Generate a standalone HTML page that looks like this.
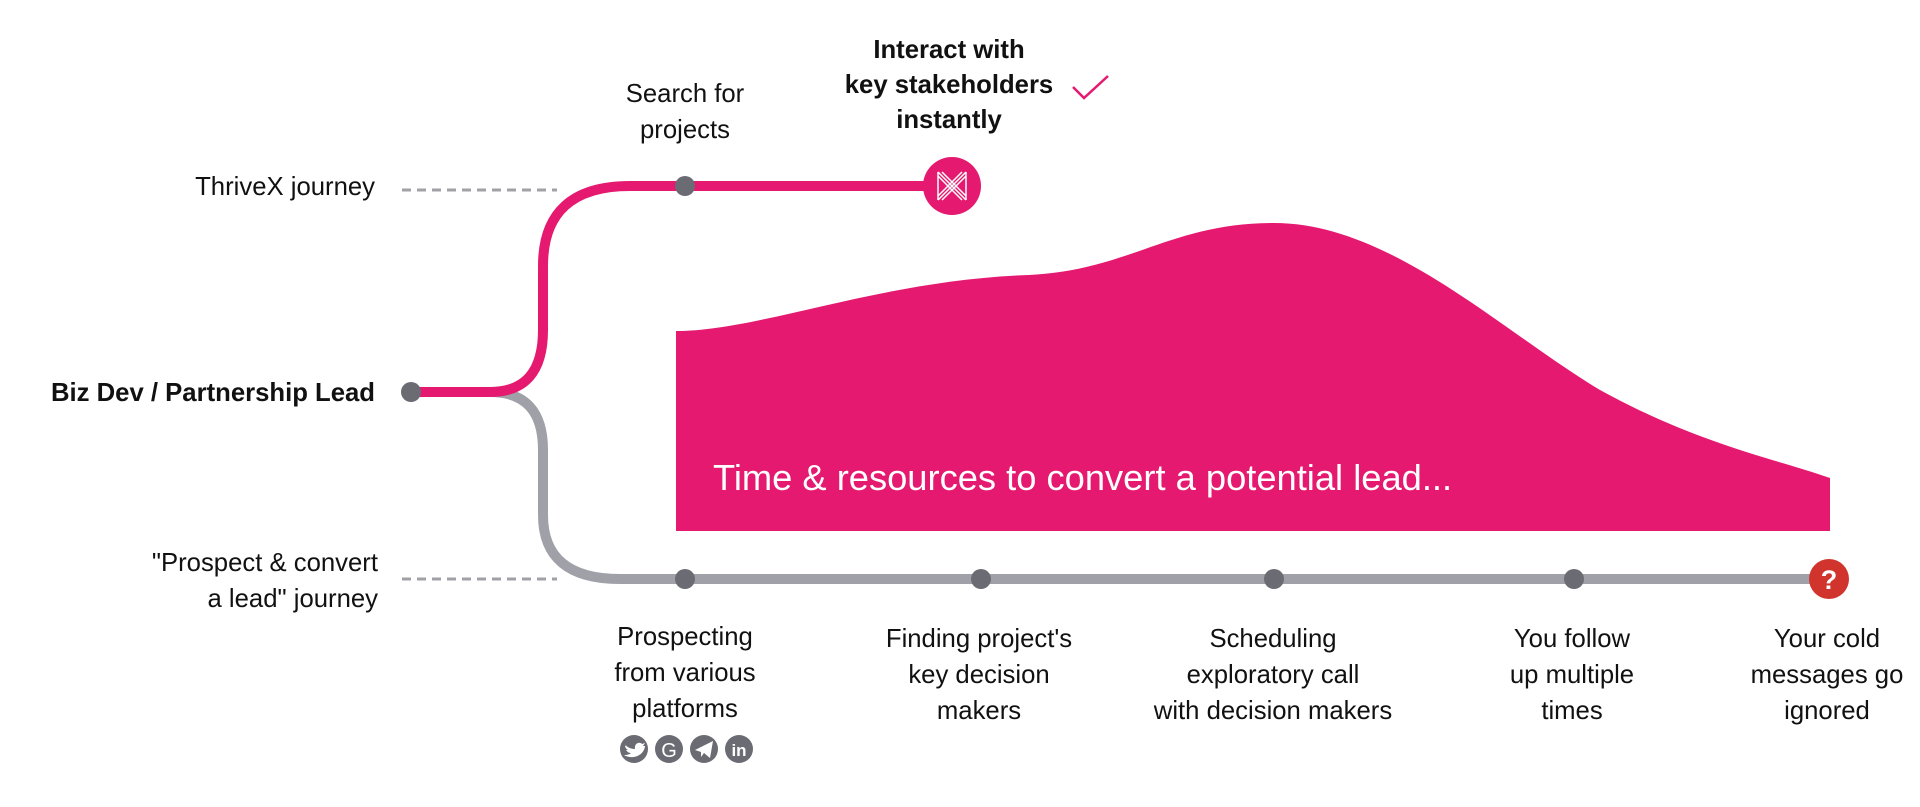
<!DOCTYPE html>
<html><head><meta charset="utf-8"><style>
html,body{margin:0;padding:0;background:#fff;width:1920px;height:807px;overflow:hidden}
svg{display:block}
text{font-family:"Liberation Sans",Arial,sans-serif;fill:#111}
</style></head><body>
<svg width="1920" height="807" viewBox="0 0 1920 807" xmlns="http://www.w3.org/2000/svg">
<path d="M676 331 C760 331 880 280 1029 275 C1130 270 1170 223 1274 223 C1390 223 1500 330 1600 390 C1700 445 1780 460 1830 478 L1830 531 L676 531 Z" fill="#e5196f"/>
<text x="713" y="490" font-size="36.3" style="fill:#fff">Time &amp; resources to convert a potential lead...</text>

<line x1="402" y1="190" x2="557" y2="190" stroke="#a0a0a6" stroke-width="3" stroke-dasharray="9 6"/>
<line x1="402" y1="579" x2="557" y2="579" stroke="#a0a0a6" stroke-width="3" stroke-dasharray="9 6"/>

<path d="M490 392 Q543 392 543 450 L543 515 Q543 579 620 579 L1829 579" fill="none" stroke="#a0a0a8" stroke-width="10"/>
<path d="M411 392 L490 392 Q543 392 543 330 L543 266 Q543 186 630 186 L952 186" fill="none" stroke="#e5196f" stroke-width="10"/>

<g fill="#6b6c73">
<circle cx="411" cy="392" r="10"/>
<circle cx="685" cy="186" r="10"/>
<circle cx="685" cy="579" r="10"/>
<circle cx="981" cy="579" r="10"/>
<circle cx="1274" cy="579" r="10"/>
<circle cx="1574" cy="579" r="10"/>
</g>
<circle cx="952" cy="186" r="29" fill="#e5196f"/>
<g stroke="#fff" stroke-width="1.5" fill="none">
<path d="M938 172 L966 200 M942 172 L966 196 M938 176 L962 200"/>
<path d="M966 172 L938 200 M962 172 L938 196 M966 176 L942 200"/>
<path d="M938 172 L938 200 M966 172 L966 200"/>
</g>
<circle cx="1829" cy="579" r="20" fill="#d0342c"/>
<text x="1829" y="589" font-size="27" font-weight="bold" text-anchor="middle" style="fill:#fff">?</text>

<path d="M1073 87 L1084 98 L1108 76" fill="none" stroke="#e5196f" stroke-width="2.5"/>

<text x="375" y="195" font-size="25.7" text-anchor="end">ThriveX journey</text>
<text x="375" y="401" font-size="25.7" font-weight="bold" text-anchor="end">Biz Dev / Partnership Lead</text>
<text x="378" y="571" font-size="25.7" text-anchor="end">"Prospect &amp; convert</text>
<text x="378" y="607" font-size="25.7" text-anchor="end">a lead" journey</text>

<g font-size="25.7" text-anchor="middle">
<text x="685" y="102">Search for</text>
<text x="685" y="138">projects</text>
<text x="949" y="58" font-weight="bold">Interact with</text>
<text x="949" y="93" font-weight="bold">key stakeholders</text>
<text x="949" y="128" font-weight="bold">instantly</text>
</g>

<g font-size="25.7" text-anchor="middle">
<text x="685" y="645">Prospecting</text>
<text x="685" y="681">from various</text>
<text x="685" y="717">platforms</text>
<text x="979" y="647">Finding project's</text>
<text x="979" y="683">key decision</text>
<text x="979" y="719">makers</text>
<text x="1273" y="647">Scheduling</text>
<text x="1273" y="683">exploratory call</text>
<text x="1273" y="719">with decision makers</text>
<text x="1572" y="647">You follow</text>
<text x="1572" y="683">up multiple</text>
<text x="1572" y="719">times</text>
<text x="1827" y="647">Your cold</text>
<text x="1827" y="683">messages go</text>
<text x="1827" y="719">ignored</text>
</g>

<g fill="#6b6c73">
<circle cx="634" cy="749" r="14"/>
<circle cx="669" cy="749" r="14"/>
<circle cx="704" cy="749" r="14"/>
<circle cx="739" cy="749" r="14"/>
</g>
<path d="M624 744 C628 748 632 749 635 749 C634 744 639 741 642 744 L645 743 L643 746 L645 746 C644 756 632 760 624 755 C628 755 630 754 631 753 C628 753 627 751 626 750 L628 750 C626 749 625 747 625 746 L627 746 C625 745 624 744 624 744 Z" fill="#fff"/>
<text x="669" y="757" font-size="20" text-anchor="middle" style="fill:#fff">G</text>
<path d="M695 750 L713 741 L710 758 L704 753 L701 757 L701 752 Z" fill="#fff"/>
<text x="739" y="756" font-size="17" font-weight="bold" text-anchor="middle" style="fill:#fff">in</text>
</svg>
</body></html>
